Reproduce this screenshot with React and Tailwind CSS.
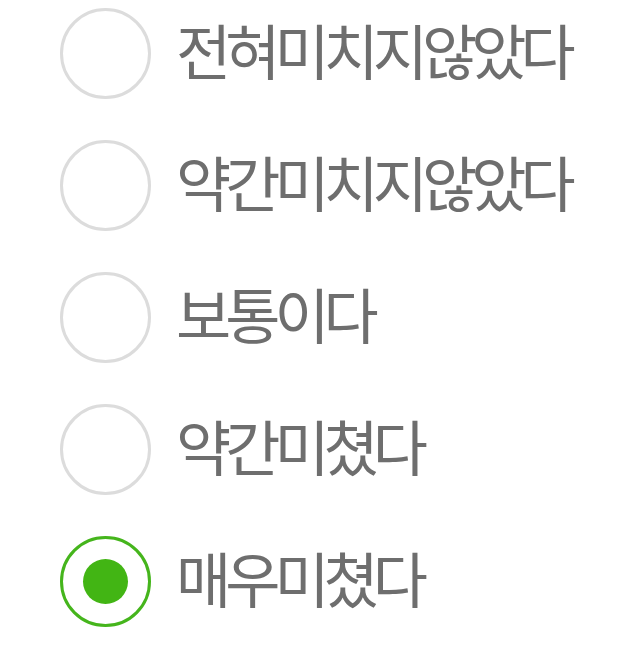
import React, { useState } from 'react';

const options = ['전혀미치지않았다', '약간미치지않았다', '보통이다', '약간미쳤다', '매우미쳤다'];

const App = () => {
    const [selected, setSelected] = useState(4);

    return (
        <div className="min-h-screen bg-white pl-[60px] pt-[8px] flex flex-col gap-[41px]">
            {options.map((label, index) => (
                <label
                    key={index}
                    className="flex items-center gap-[25px] cursor-pointer"
                    onClick={() => setSelected(index)}
                >
                    <span
                        className={`w-[91px] h-[91px] rounded-full border-[3px] flex items-center justify-center shrink-0 ${
                            selected === index ? 'border-[#45b51c]' : 'border-[#dcdcdc]'
                        }`}
                    >
                        {selected === index && <span className="w-[45px] h-[45px] rounded-full bg-[#42b514]" />}
                    </span>
                    <span className="text-[60px] leading-none tracking-[-6px] text-[#6e6e6e] font-['Noto_Sans_CJK_KR',sans-serif] -mt-[9px]">
                        {label}
                    </span>
                </label>
            ))}
        </div>
    );
};

export default App;
